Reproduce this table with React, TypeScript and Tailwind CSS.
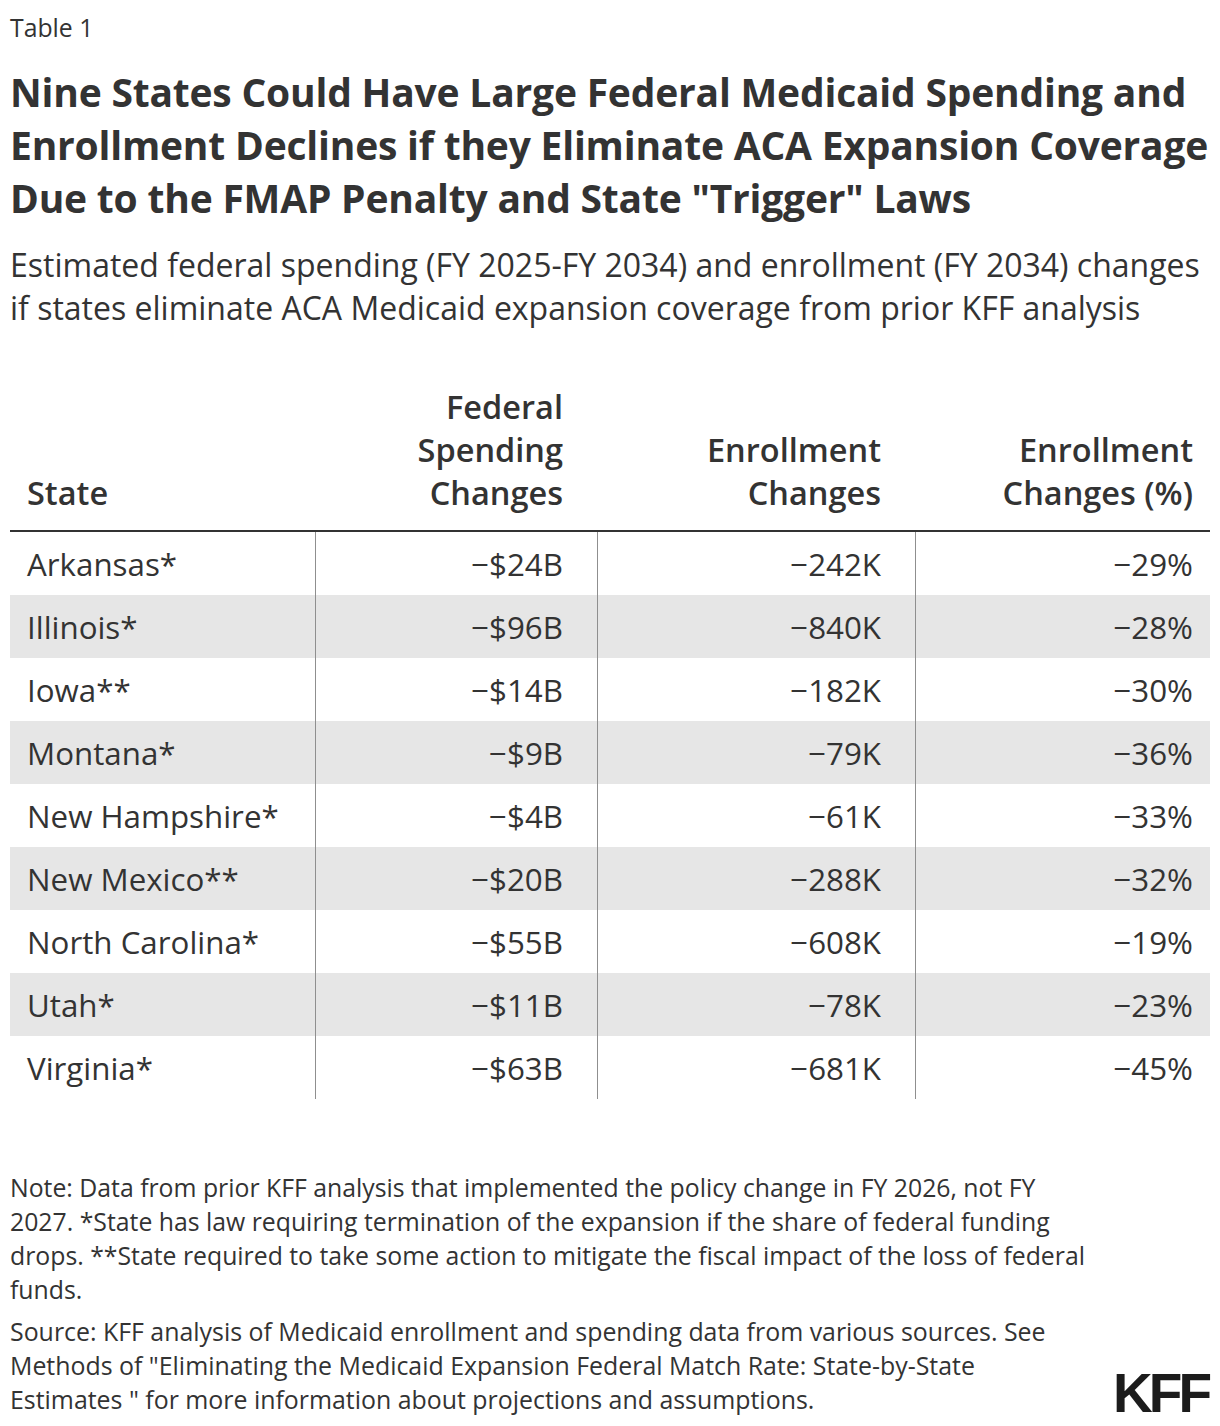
import React from "react";

const rows: [string, string, string, string][] = [
  ["Arkansas*", "−$24B", "−242K", "−29%"],
  ["Illinois*", "−$96B", "−840K", "−28%"],
  ["Iowa**", "−$14B", "−182K", "−30%"],
  ["Montana*", "−$9B", "−79K", "−36%"],
  ["New Hampshire*", "−$4B", "−61K", "−33%"],
  ["New Mexico**", "−$20B", "−288K", "−32%"],
  ["North Carolina*", "−$55B", "−608K", "−19%"],
  ["Utah*", "−$11B", "−78K", "−23%"],
  ["Virginia*", "−$63B", "−681K", "−45%"],
];

export default function App() {
  return (
    <div
      className="w-[1220px] bg-white px-[10px] pt-[10px] pb-[10px] text-[#333333]"
      style={{ fontFamily: '"Open Sans", "Noto Sans", sans-serif' }}
    >
      <div className="text-[24.8px] leading-[34px]">Table 1</div>
      <h1 className="mt-[21px] whitespace-nowrap text-[39px] font-bold leading-[53px] tracking-[-0.2px]">
        Nine States Could Have Large Federal Medicaid Spending and
        <br />
        Enrollment Declines if they Eliminate ACA Expansion Coverage
        <br />
        Due to the FMAP Penalty and State "Trigger" Laws
      </h1>
      <p className="mt-[19px] whitespace-nowrap text-[32px] leading-[43px]">
        Estimated federal spending (FY 2025-FY 2034) and enrollment (FY 2034) changes
        <br />
        if states eliminate ACA Medicaid expansion coverage from prior KFF analysis
      </p>

      <div className="mt-[56px] w-[1200px]">
        <div className="grid grid-cols-[305px_282px_318px_295px] items-end border-b-2 border-[#333333] pb-[16px] text-[32.5px] font-semibold leading-[43px]">
          <div className="pl-[17px]">State</div>
          <div className="pr-[34px] text-right">
            Federal
            <br />
            Spending
            <br />
            Changes
          </div>
          <div className="pr-[34px] text-right">
            Enrollment
            <br />
            Changes
          </div>
          <div className="pr-[17px] text-right">
            Enrollment
            <br />
            Changes (%)
          </div>
        </div>
        {rows.map((r, i) => (
          <div
            key={r[0]}
            className={
              "grid h-[63px] grid-cols-[305px_282px_318px_295px] text-[31.3px] leading-[40px] " +
              (i % 2 === 1 ? "bg-[#e6e6e6]" : "bg-white")
            }
          >
            <div className="flex items-center pl-[17px]">{r[0]}</div>
            <div className="flex items-center justify-end border-l border-[#8f8f8f] pr-[34px]">{r[1]}</div>
            <div className="flex items-center justify-end border-l border-[#8f8f8f] pr-[34px]">{r[2]}</div>
            <div className="flex items-center justify-end border-l border-[#8f8f8f] pr-[17px]">{r[3]}</div>
          </div>
        ))}
      </div>

      <p className="mt-[71px] whitespace-nowrap text-[24.8px] leading-[34px]">
        Note: Data from prior KFF analysis that implemented the policy change in FY 2026, not FY
        <br />
        2027. *State has law requiring termination of the expansion if the share of federal funding
        <br />
        drops. **State required to take some action to mitigate the fiscal impact of the loss of federal
        <br />
        funds.
      </p>
      <div className="mt-[8px] flex items-end justify-between">
        <p className="whitespace-nowrap text-[24.9px] leading-[34px]">
          Source: KFF analysis of Medicaid enrollment and spending data from various sources. See
          <br />
          Methods of "Eliminating the Medicaid Expansion Federal Match Rate: State-by-State
          <br />
          Estimates " for more information about projections and assumptions.
        </p>
        <div
          className="mr-[2px] mb-[3px] text-[55px] font-bold leading-[40px] tracking-[-4px] text-[#1c1c1c]"
          style={{ fontFamily: '"Liberation Sans", Arial, sans-serif' }}
        >
          KFF
        </div>
      </div>
    </div>
  );
}
